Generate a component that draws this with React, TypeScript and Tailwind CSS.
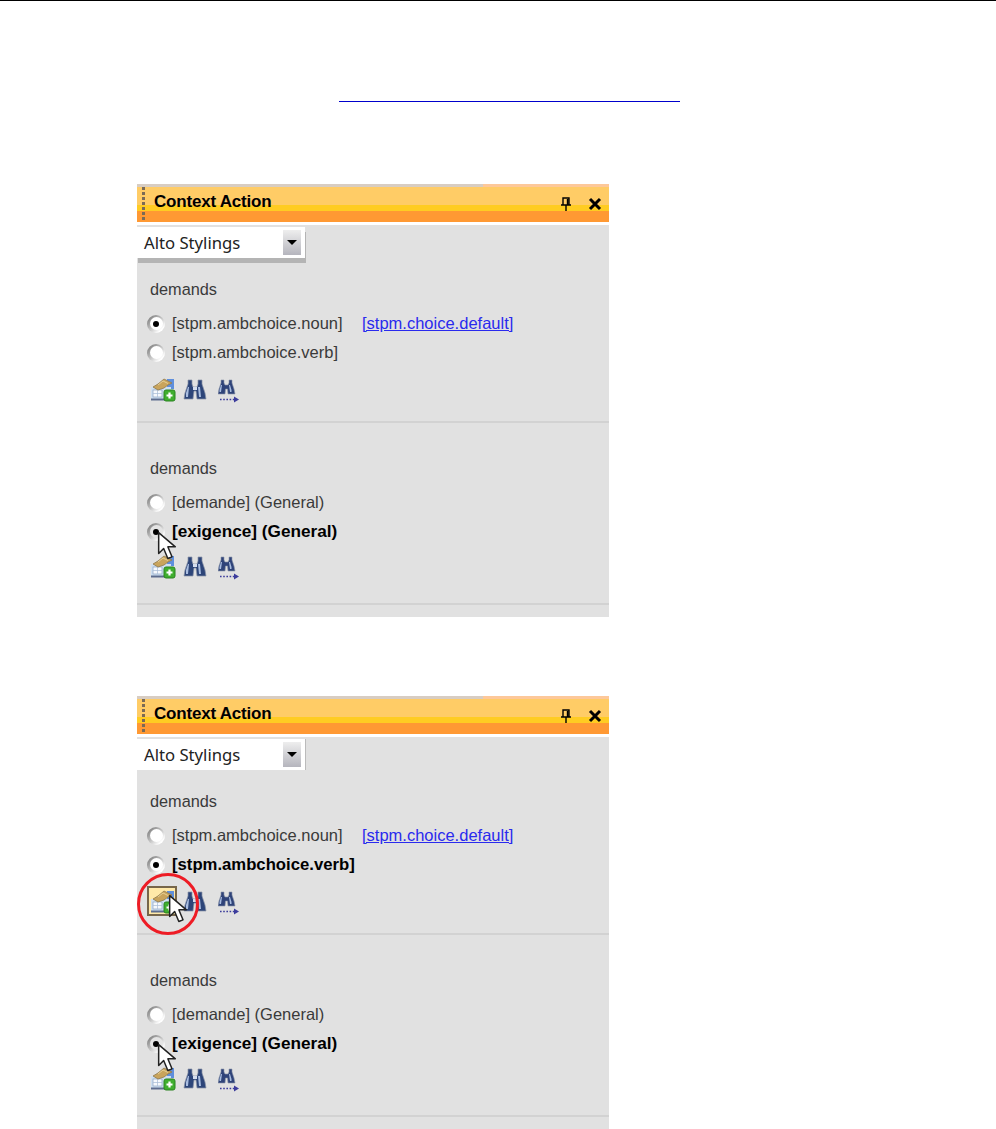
import React from "react";

const AddIcon: React.FC = () => (
  <svg width="26" height="24" viewBox="0 0 26 24" className="block">
    <path d="M17 1h7v10h-7z" fill="#5f8fdc" />
    <rect x="1" y="9" width="20" height="12" fill="#cfe0f2" />
    <path d="M1 21.500h20" stroke="#5d6c8e" strokeWidth="2" />
    <rect x="3" y="12" width="9" height="7" fill="#f6f9fd" stroke="#8ca3c4" strokeWidth="0.7" />
    <path d="M3 15.500h9M7.500 12v7" stroke="#a8bbd6" strokeWidth="0.7" />
    <path d="M3 9 L8 6 L14 1 L22 5 L18 7 L14 10 L8 12 Z" fill="#c9a45c" stroke="#8f7a4c" strokeWidth="0.8" />
    <path d="M8 7l5-4 5 2.500" fill="none" stroke="#e6cf95" strokeWidth="1" />
    <rect x="14" y="12" width="11" height="11" rx="2" fill="#3fae2e" stroke="#2b8420" />
    <path d="M19.500 14.500v6M16.500 17.500h6" stroke="#fff" strokeWidth="2.200" />
  </svg>
);

const BinocularsIcon: React.FC = () => (
  <svg width="24" height="22" viewBox="0 0 24 22" className="block">
    <path d="M5 1h4v4l1 3h4l1-3V1h4v4l3 9 1 6h-9l-1-8h-2l-1 8H1l1-6 3-9z" fill="#2d4579" stroke="#8a93a8" strokeWidth="0.7" />
    <path d="M5 8l-2 6v4h2l1-10zM15 8l1 10h2l-1-10z" fill="#a9bde0" />
    <path d="M10 8h4v3h-4z" fill="#d5deee" />
  </svg>
);

const FindNextIcon: React.FC = () => (
  <svg width="22" height="24" viewBox="0 0 22 24" className="block">
    <path d="M3 1h3v3l1 2h3l1-2V1h3v3l2 6 1 5H10l-.500-5H7.500L7 15H0l1-5 2-6z" fill="#2f4379" stroke="#8a93a8" strokeWidth="0.6" />
    <path d="M3 6l-1.500 5v2H3l1-7zM11 6l1 7h1.500v-2L12 6z" fill="#a9bde0" />
    <path d="M2 20.500h14" stroke="#3c3c9c" strokeWidth="1.400" strokeDasharray="1.600 1.600" />
    <path d="M16 17.500l5 3-5 3z" fill="#3c3c9c" />
  </svg>
);

const CursorIcon: React.FC = () => (
  <svg width="20" height="30" viewBox="0 0 24 36" className="block">
    <path d="M2 2v25l6-6 5 12 5-2-5-12h9z" fill="#fff" stroke="#222" strokeWidth="1.800" strokeLinejoin="round" />
  </svg>
);

const Radio: React.FC<{ checked?: boolean; hovered?: boolean }> = ({ checked, hovered }) => (
  <span className="flex h-[18px] w-[18px] shrink-0 items-center justify-center rounded-full bg-[linear-gradient(135deg,#6e6e6e,#b4b4b4_40%,#ffffff_80%)]">
    <span className={`flex h-[13px] w-[13px] items-center justify-center rounded-full ${hovered ? "bg-[#e4e4e4]" : "bg-white"}`}>
      {checked && <span className="h-[6px] w-[6px] rounded-full bg-black" />}
    </span>
  </span>
);

const Option: React.FC<{
  label: string;
  checked?: boolean;
  bold?: boolean;
  hovered?: boolean;
  link?: boolean;
}> = ({ label, checked, bold, hovered, link }) => (
  <div className="-ml-[3px] flex h-[29px] items-center">
    <div className="relative flex items-center">
      <Radio checked={checked} hovered={hovered} />
      {hovered && (
        <span className="absolute left-[10px] top-[8px] z-10">
          <CursorIcon />
        </span>
      )}
    </div>
    <span
      className={`ml-[7px] w-[190px] whitespace-nowrap ${
        bold ? `${hovered ? "text-[17.2px]" : "text-[16.7px]"} font-bold text-black` : "text-[16.5px] text-[#3a3a3a]"
      }`}
    >
      {label}
    </span>
    {link && <a className="whitespace-nowrap text-[16.5px] text-[#2a2aee] underline">[stpm.choice.default]</a>}
  </div>
);

const IconRow: React.FC<{ marked?: boolean }> = ({ marked }) => (
  <div className="flex items-center gap-[7px]">
    <div className="relative">
      {marked && (
        <>
          <span className="absolute -left-[3px] -top-[4px] h-[30px] w-[30px] border-2 border-[#77664a] bg-[#ffe9a8]" />
          <span className="absolute -left-[13px] -top-[17px] z-10 h-[62px] w-[62px] rounded-full border-[3px] border-[#ee1c25]" />
          <span className="absolute left-[18px] top-[4px] z-20">
            <CursorIcon />
          </span>
        </>
      )}
      <span className="relative block">
        <AddIcon />
      </span>
    </div>
    <BinocularsIcon />
    <span className="ml-[4px] mt-[2px]">
      <FindNextIcon />
    </span>
  </div>
);

const Panel: React.FC<{ variant: "first" | "second" }> = ({ variant }) => {
  const second = variant === "second";
  return (
    <div className="flex h-[433px] w-[472px] flex-col overflow-hidden bg-[#e1e1e1]">
      {/* title bar */}
      <div className="relative h-[38px] shrink-0">
        <div className="flex h-[3px]">
          <div className="w-[346px] bg-[#d8cdc2]" />
          <div className="flex-1 bg-[#fdc89a]" />
        </div>
        <div className="h-[35px] bg-[linear-gradient(#ffcc66_0,#ffcc66_18px,#ffcc22_18px,#ffcc22_24px,#ff9933_24px)]">
          <div className="absolute left-[5px] top-[3px] flex flex-col gap-[2px]">
            {[0, 1, 2, 3, 4, 5, 6].map((i) => (
              <span key={i} className="h-[3px] w-[3px] bg-[#7a6a55]" />
            ))}
          </div>
          <div className="flex h-[30px] items-center pl-[17px] pr-[7px]">
            <span className="text-[17px] font-bold tracking-[-0.2px] text-black">Context Action</span>
            <div className="ml-auto mt-[4px] flex items-center gap-[15px]">
              <svg width="14" height="14" viewBox="0 0 14 14">
                <path d="M4 1h6v7H4zM2 8h10M7 8v6M8.500 2v6" fill="none" stroke="#000" strokeWidth="1.400" />
              </svg>
              <svg width="14" height="14" viewBox="0 0 14 14">
                <path d="M2 2l10 10M12 2L2 12" stroke="#000" strokeWidth="3" />
              </svg>
            </div>
          </div>
        </div>
      </div>
      <div className="h-[3px] shrink-0 bg-white" />

      {/* style dropdown */}
      <div
        className={`mt-[2px] flex h-[31px] w-[168px] shrink-0 items-center justify-between bg-white pl-[7px] pr-[4px] ${
          second ? "shadow-[1px_0_0_#bbbbbb]" : "shadow-[1px_5px_0_#b4b4b4]"
        }`}
      >
        <span className="font-['Noto_Sans'] text-[16.7px] text-[#222]">Alto Stylings</span>
        <span className="flex h-[25px] w-[18px] items-center justify-center bg-[linear-gradient(#eeeeee,#b5b5bd)]">
          <span className="h-0 w-0 border-x-[5px] border-t-[5px] border-x-transparent border-t-black" />
        </span>
      </div>

      {/* source section */}
      <div className="flex h-[165px] shrink-0 flex-col border-b-2 border-[#d2d2d2] pl-[13px] pt-[19px]">
        <div className="text-[16.3px] leading-[24px] text-[#3a3a3a]">demands</div>
        <div className="mt-[8px]">
          <Option label="[stpm.ambchoice.noun]" checked={!second} link />
          <Option label="[stpm.ambchoice.verb]" checked={second} bold={second} />
        </div>
        <div className="mt-[10px]">
          <IconRow marked={second} />
        </div>
      </div>

      {/* target section */}
      <div className="flex h-[182px] shrink-0 flex-col border-b-2 border-[#d2d2d2] pl-[13px] pt-[33px]">
        <div className="text-[16.3px] leading-[24px] text-[#3a3a3a]">demands</div>
        <div className="mt-[8px]">
          <Option label="[demande] (General)" />
          <Option label="[exigence] (General)" checked bold hovered />
        </div>
        <div className="mt-[8px]">
          <IconRow />
        </div>
      </div>
    </div>
  );
};

export default function App() {
  return (
    <div className="h-[1129px] w-[996px] overflow-hidden bg-white font-['Liberation_Sans',sans-serif]">
      <div className="h-[1px] bg-black" />
      <div className="ml-[339px] mt-[100px] h-[1px] w-[341px] bg-[#0000cc]" />
      <div className="ml-[137px] mt-[82px]">
        <Panel variant="first" />
      </div>
      <div className="ml-[137px] mt-[79px]">
        <Panel variant="second" />
      </div>
    </div>
  );
}
